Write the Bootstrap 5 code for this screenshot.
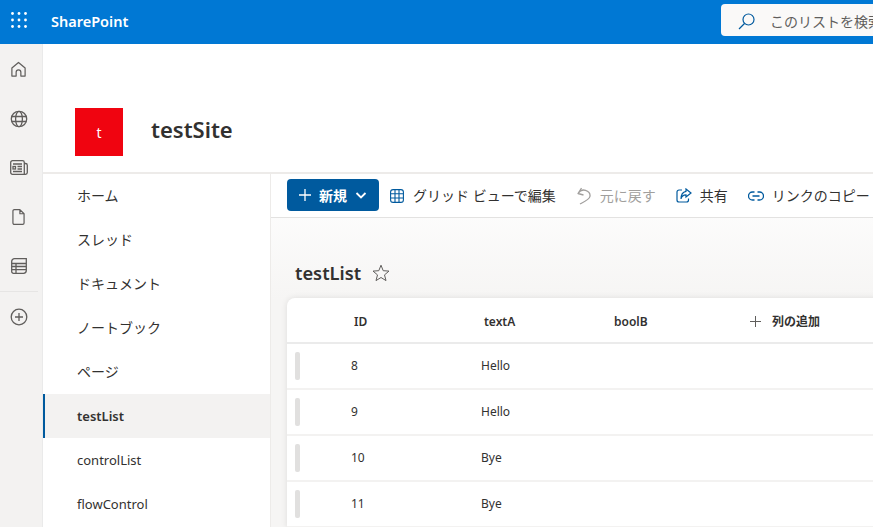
<!DOCTYPE html>
<html lang="ja">
<head>
<meta charset="utf-8">
<title>testList</title>
<link href="https://cdn.jsdelivr.net/npm/bootstrap@5.3.0/dist/css/bootstrap.min.css" rel="stylesheet">
<style>
html,body{height:527px;overflow:hidden}
body{font-family:"Noto Sans","Noto Sans CJK JP",sans-serif;color:#323130;font-size:14px;background:#fff}
.sp-top{height:44px;background:#0078d4;color:#fff;overflow:hidden}
.sp-waffle{width:38px;flex:none;padding-bottom:5px}
.sp-brand{font-size:14.5px;font-weight:600;margin-left:13px;width:670px;flex:none}
.sp-search{width:400px;height:32px;flex:none;background:#faf9f8;border-radius:4px;color:#605e5c;font-size:14px;padding:2px 0 0 17px;gap:15px;margin-bottom:4px}
.sp-body{height:483px}
.sp-rail{width:43px;flex:none;background:#f3f2f1;border-right:1px solid #eaeaea;padding-top:1px}
.sp-railbtn{height:49px;padding-right:5px}
.sp-raildiv{width:38px;height:1px;background:#e6e5e4;margin-top:1px}
.sp-main{min-width:0;overflow:hidden}
.sp-head{height:130px;padding:64px 0 0 32px;border-bottom:2px solid #edebe9;flex:none}
.sp-logo{width:48px;height:48px;background:#f00410;color:#fff;font-size:14px}
.sp-title{font-size:22px;font-weight:600;margin-left:28px;color:#323130;line-height:43px}
.sp-nav{width:228px;flex:none;border-right:1px solid #edebe9}
.sp-navitem{height:44px;padding:0 0 2px 34px;font-size:14px;color:#323130;border-left:0 solid #005a9e}
.sp-navlatin{font-size:13px;padding-top:1px;padding-bottom:0}
.sp-navitem.sp-on{background:#f3f2f1;font-weight:600;border-left-width:2px;padding-left:32px}
.sp-content{min-width:0;overflow:hidden;background:linear-gradient(#fff 0,#f6f5f4 125px)}
.sp-cmd{height:44px;background:#fff;border-bottom:1px solid #e3e2e1;padding:0 0 0 16px;white-space:nowrap;width:640px;font-size:14px}
.sp-new{width:92px;height:32px;background:#005a9e;color:#fff;border:0;border-radius:4px;font-weight:600;font-size:14px;padding:0 0 0 12px;gap:8px;flex:none;margin-bottom:1px}
.sp-act{margin-left:11px;gap:9px;flex:none}
.sp-act.sp-off{color:#a19f9d;margin-left:21px}
.sp-act.sp-share{margin-left:20px;gap:8px}
.sp-act.sp-link{margin-left:20px;gap:8px}
.sp-listtitle{font-size:18.3px;font-weight:600;padding:42px 0 0 24px;height:80px;gap:11px;line-height:26px}
.sp-table{margin-left:16px;width:640px;background:#fff;border-radius:8px 8px 0 0;box-shadow:0 0 6px rgba(0,0,0,.1);font-size:12px}
.sp-thead{height:46px;border-bottom:2px solid #ebebeb;font-weight:600;padding-top:3px}
.sp-row{height:46px;border-bottom:2px solid #f3f2f1}
.sp-grip{width:5px;height:28px;background:#e1e0df;border-radius:2px;margin-left:8px;flex:none}
.sp-c1{width:197px;flex:none;padding-left:67px}
.sp-c2{width:130px;flex:none}
.sp-c3{width:136px;flex:none}
.sp-c0{padding-left:51px;width:181px;flex:none}
.sp-add{gap:11px}
</style>
</head>
<body>
<div class="sp-top d-flex align-items-center">
  <div class="sp-waffle d-flex justify-content-center">
    <svg width="16" height="16" viewBox="0 0 16 16" fill="#fff"><circle cx="1.500" cy="1.500" r="1.400"/><circle cx="8" cy="1.500" r="1.400"/><circle cx="14.500" cy="1.500" r="1.400"/><circle cx="1.500" cy="8" r="1.400"/><circle cx="8" cy="8" r="1.400"/><circle cx="14.500" cy="8" r="1.400"/><circle cx="1.500" cy="14.500" r="1.400"/><circle cx="8" cy="14.500" r="1.400"/><circle cx="14.500" cy="14.500" r="1.400"/></svg>
  </div>
  <div class="sp-brand">SharePoint</div>
  <div class="sp-search d-flex align-items-center">
    <svg width="17" height="17" viewBox="0 0 17 17" fill="none" stroke="#005a9e" stroke-width="1.2"><circle cx="10.500" cy="6.500" r="5.500"/><path d="M6.500 10.500 1 16"/></svg>
    <span>このリストを検索</span>
  </div>
</div>
<div class="sp-body d-flex">
  <div class="sp-rail">
    <div class="sp-railbtn d-flex align-items-center justify-content-center"><svg width="17" height="17" viewBox="0 0 18 18" fill="none" stroke="#605e5c" stroke-width="1.3" stroke-linejoin="round"><path d="M9 1.500 2 7.500V16h4.500v-4a2.500 2.500 0 0 1 5 0v4H16V7.500z"/></svg></div>
    <div class="sp-railbtn d-flex align-items-center justify-content-center"><svg width="18" height="18" viewBox="0 0 18 18" fill="none" stroke="#605e5c" stroke-width="1.300"><circle cx="9" cy="9" r="7.700"/><ellipse cx="9" cy="9" rx="3.400" ry="7.700"/><path d="M1.600 6.500h14.800M1.600 11.500h14.800"/></svg></div>
    <div class="sp-railbtn d-flex align-items-center justify-content-center"><svg width="18" height="15" viewBox="0 0 18 15" fill="none" stroke="#605e5c" stroke-width="1.300"><path d="M.7 2.500A1.800 1.800 0 0 1 2.500.7H12.500A1.800 1.800 0 0 1 14.300 2.500V14.300H2.500A1.800 1.800 0 0 1 .7 12.500zM14.300 3.500H15.500A1.800 1.800 0 0 1 17.300 5.300V12.500A1.800 1.800 0 0 1 15.500 14.300H14.300"/><rect x="3" y="6.500" width="2.500" height="2.500"/><path d="M3 4h9M7.500 6.500h4.500M7.500 9h4.500M3 11.500h9"/></svg></div>
    <div class="sp-railbtn d-flex align-items-center justify-content-center"><svg width="13" height="18" viewBox="0 0 14 18" fill="none" stroke="#605e5c" stroke-width="1.300" stroke-linejoin="round"><path d="M2.500 1H8.500L13 5.500V15.500A1.500 1.500 0 0 1 11.500 17H2.500A1.500 1.500 0 0 1 1 15.500V2.500A1.500 1.500 0 0 1 2.500 1zM8.500 1V5.500H13"/></svg></div>
    <div class="sp-railbtn d-flex align-items-center justify-content-center"><svg width="16" height="16" viewBox="0 0 16 16" fill="none" stroke="#605e5c" stroke-width="1.300"><path d="M.7 3.500A2.800 2.800 0 0 1 3.500.7H15.300V12.500A2.800 2.800 0 0 1 12.500 15.300H2.500A1.800 1.800 0 0 1 .7 13.500zM.7 5.500H15.300M.7 8.500H15.300M.7 11.700H15.300M5 5.500V15.300"/></svg></div>
    <div class="sp-raildiv"></div>
    <div class="sp-railbtn d-flex align-items-center justify-content-center"><svg width="18" height="18" viewBox="0 0 18 18" fill="none" stroke="#605e5c" stroke-width="1.300"><circle cx="9" cy="9" r="7.800"/><path d="M9 5v8M5 9h8"/></svg></div>
  </div>
  <div class="sp-main flex-grow-1 d-flex flex-column">
    <div class="sp-head d-flex">
      <div class="sp-logo d-flex align-items-center justify-content-center">t</div>
      <div class="sp-title">testSite</div>
    </div>
    <div class="d-flex flex-grow-1">
      <div class="sp-nav">
        <div class="sp-navitem d-flex align-items-center">ホーム</div>
        <div class="sp-navitem d-flex align-items-center">スレッド</div>
        <div class="sp-navitem d-flex align-items-center">ドキュメント</div>
        <div class="sp-navitem d-flex align-items-center">ノートブック</div>
        <div class="sp-navitem d-flex align-items-center">ページ</div>
        <div class="sp-navitem sp-navlatin sp-on d-flex align-items-center">testList</div>
        <div class="sp-navitem sp-navlatin d-flex align-items-center">controlList</div>
        <div class="sp-navitem sp-navlatin d-flex align-items-center">flowControl</div>
      </div>
      <div class="sp-content flex-grow-1">
        <div class="sp-cmd d-flex align-items-center">
          <button class="sp-new d-flex align-items-center" type="button">
            <svg width="12" height="12" viewBox="0 0 12 12" stroke="#fff" stroke-width="1.300"><path d="M6 0v12M0 6h12"/></svg>
            <span>新規</span>
            <svg width="12" height="12" viewBox="0 0 12 12" fill="none" stroke="#fff" stroke-width="1.800"><path d="M1.500 4 6 8.500 10.500 4"/></svg>
          </button>
          <div class="sp-act d-flex align-items-center">
            <svg width="14" height="14" viewBox="0 0 14 14" fill="none" stroke="#005a9e" stroke-width="1.100"><rect x=".6" y=".6" width="12.800" height="12.800" rx="2.500"/><path d="M.6 4.800h12.800M.6 9h12.800M5 .6v12.800M9 .6v12.800"/></svg>
            <span>グリッド ビューで編集</span>
          </div>
          <div class="sp-act sp-off d-flex align-items-center">
            <svg width="14" height="18" viewBox="0 0 14 18" fill="none" stroke="#a19f9d" stroke-width="1.300" stroke-linejoin="round"><path d="M4.500 1 1 6.500 6.500 8M1 6.500C3 3.500 6 2.500 8.500 3.300 11.500 4.200 13.300 6.500 13 9.300 12.600 12.500 7 15 3 17"/></svg>
            <span>元に戻す</span>
          </div>
          <div class="sp-act sp-share d-flex align-items-center">
            <svg width="16" height="15" viewBox="0 0 16 15" fill="none" stroke="#005a9e" stroke-width="1.200"><path d="M6 2H3A2 2 0 0 0 1 4V12A2 2 0 0 0 3 14H10.500A2 2 0 0 0 12.500 12V10.500M10 1 15 5 10 9V6.800C7.500 6.800 5.500 8.500 5 11 5 6.500 7.500 3.800 10 3.300z"/></svg>
            <span>共有</span>
          </div>
          <div class="sp-act sp-link d-flex align-items-center">
            <svg width="16" height="10" viewBox="0 0 16 10" fill="none" stroke="#005a9e" stroke-width="1.300"><path d="M6.500 1H4.500a4 4 0 0 0 0 8h2M9.500 1h2a4 4 0 0 1 0 8h-2M4.500 5h7"/></svg>
            <span>リンクのコピー</span>
          </div>
        </div>
        <div class="sp-listtitle d-flex align-items-start">
          <span>testList</span>
          <svg class="mt-1" width="18" height="18" viewBox="0 0 18 18" fill="none" stroke="#605e5c" stroke-width="1"><path d="M9 1.200 11.200 6.700 17 7.100 12.500 10.900 14 16.600 9 13.500 4 16.600 5.500 10.900 1 7.100 6.800 6.700z"/></svg>
        </div>
        <div class="sp-table">
          <div class="sp-thead d-flex align-items-center">
            <div class="sp-c1">ID</div>
            <div class="sp-c2">textA</div>
            <div class="sp-c3">boolB</div>
            <div class="sp-add d-flex align-items-center">
              <svg width="11" height="11" viewBox="0 0 11 11" stroke="#605e5c" stroke-width="1"><path d="M5.500 0v11M0 5.500h11"/></svg>
              <span>列の追加</span>
            </div>
          </div>
          <div class="sp-row d-flex align-items-center"><div class="sp-grip"></div><div class="sp-c0">8</div><div>Hello</div></div>
          <div class="sp-row d-flex align-items-center"><div class="sp-grip"></div><div class="sp-c0">9</div><div>Hello</div></div>
          <div class="sp-row d-flex align-items-center"><div class="sp-grip"></div><div class="sp-c0">10</div><div>Bye</div></div>
          <div class="sp-row d-flex align-items-center"><div class="sp-grip"></div><div class="sp-c0">11</div><div>Bye</div></div>
        </div>
      </div>
    </div>
  </div>
</div>
<script src="https://cdn.jsdelivr.net/npm/bootstrap@5.3.0/dist/js/bootstrap.bundle.min.js"></script>
</body>
</html>
